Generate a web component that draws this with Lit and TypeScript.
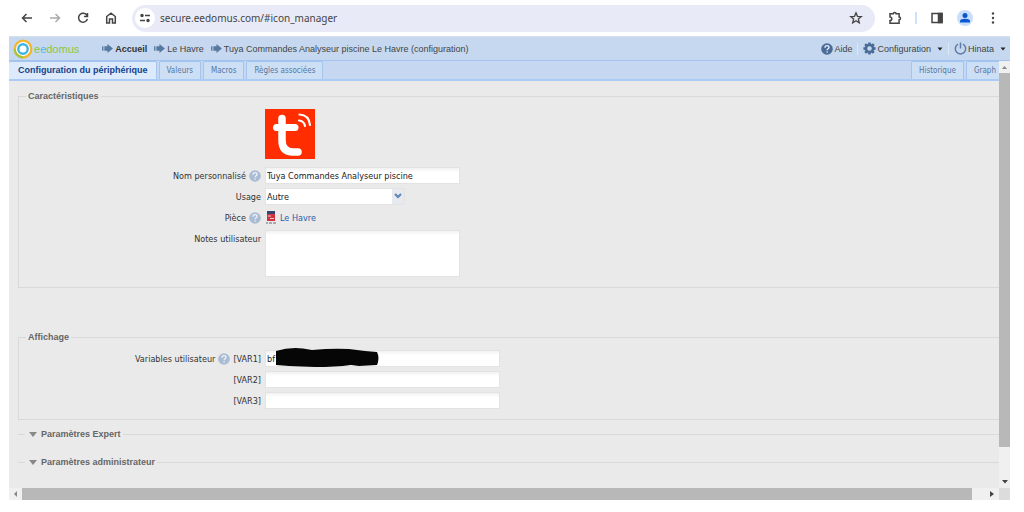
import { LitElement, html, svg, css } from "lit";
import { customElement, property } from "lit/decorators.js";

const arrow = html`<svg class="arrow" viewBox="0 0 12 10" aria-hidden="true"><path d="M0 2.500h1.500v5H0zM2.500 2.500H6V0l6 5-6 5V7.500H2.500z" fill="#5679a0" /></svg>`;

const caret = html`<svg class="caret" viewBox="0 0 6 4" aria-hidden="true"><path d="M0.500 0.500h5L3 3.500z" fill="#222" /></svg>`;

@customElement("help-mark")
class HelpMark extends LitElement {
  @property({ type: Boolean, reflect: true }) dark = false;

  static styles = css`
    :host { display: inline-flex; flex: none; width: 12px; height: 12px; color: #a9bcd3; }
    :host([dark]) { color: #4a6b97; }
    svg { display: block; width: 100%; height: 100%; }
  `;

  render() {
    return html`<svg viewBox="0 0 12 12" aria-hidden="true">
      <circle cx="6" cy="6" r="5.8" fill="currentColor" />
      <path d="M4 4.700C4 3.400 4.900 2.700 6 2.700s2 .7 2 1.800c0 1.300-1.900 1.400-1.900 2.800" fill="none" stroke="#eef3f9" stroke-width="1.300" />
      <circle cx="6.100" cy="9" r=".8" fill="#eef3f9" />
    </svg>`;
  }
}

@customElement("browser-bar")
class BrowserBar extends LitElement {
  static styles = css`
    :host { display: flex; align-items: center; height: 36px; padding: 0 24px 0 20px; box-sizing: border-box; background: #fff; }
    button { display: flex; align-items: center; justify-content: center; width: 14px; height: 14px; padding: 0; border: 0; background: none; flex: none; }
    svg { width: 14px; height: 14px; display: block; fill: none; stroke: #444; stroke-width: 1.500; }
    .nav { display: flex; gap: 14px; }
    .off svg { stroke: #aaa; }
    .address { display: flex; align-items: center; flex: 1; gap: 5px; height: 27px; margin: 0 13px 0 14px; padding: 0 12px 0 3px; border-radius: 14px; background: #e8ebf7; box-sizing: border-box; }
    .site { width: 20px; height: 20px; border-radius: 50%; background: #fff; }
    input { flex: 1; min-width: 0; border: 0; padding: 0; background: none; font: 10px/16px "Noto Sans", sans-serif; color: #444; outline: 0; }
    .tools { display: flex; align-items: center; gap: 13px; }
    .rule { width: 2px; height: 12px; background: #cfe2fb; }
    .me { width: 16px; height: 16px; border-radius: 50%; background: #c8defb; }
    .me svg { width: 16px; height: 16px; stroke: none; fill: #0b57d0; }
    .solid svg { fill: #444; stroke: none; }
  `;

  render() {
    return html`
      <div class="nav">
        <button aria-label="Retour"><svg viewBox="0 0 14 14"><path d="M12 7H2.500M6.500 3L2.500 7l4 4" /></svg></button>
        <button class="off" aria-label="Avancer"><svg viewBox="0 0 14 14"><path d="M2 7h9.500M7.500 3l4 4-4 4" /></svg></button>
        <button aria-label="Actualiser"><svg viewBox="0 0 14 14"><path d="M11 4.500A4.500 4.500 0 1 0 11.400 8M11.500 2v3.500H8" /></svg></button>
        <button aria-label="Accueil"><svg viewBox="0 0 14 14"><path d="M2.700 12V5.500L7 2.200l4.300 3.300V12H8.500V8h-3v4z" /></svg></button>
      </div>
      <div class="address">
        <button class="site" aria-label="Informations sur le site"><svg viewBox="0 0 14 14"><path d="M7 4.500h5M2 9.500h5" /><circle cx="4" cy="4.500" r="1" fill="#444" /><circle cx="10" cy="9.500" r="1" fill="#444" /></svg></button>
        <input aria-label="Adresse" value="secure.eedomus.com/#icon_manager" />
        <button aria-label="Favori"><svg viewBox="0 0 14 14"><path d="M7 1.800l1.500 3.500 3.800.3-2.900 2.500.9 3.700L7 9.800l-3.300 2 .9-3.700-2.900-2.500 3.800-.3z" stroke-width="1.300" /></svg></button>
      </div>
      <div class="tools">
        <button aria-label="Extensions"><svg viewBox="0 0 14 14"><path d="M2 2.800h3.300a1.400 1.400 0 0 1 2.800 0h3V6a1.400 1.400 0 0 1 0 2.800v3.400H2V9.500a1.800 1.800 0 0 0 0-3.600z" /></svg></button>
        <span class="rule"></span>
        <button aria-label="Panneau"><svg viewBox="0 0 14 14"><path d="M2 2.500h10v9H2z" /><path d="M8.500 2.500H12v9H8.500z" fill="#444" /></svg></button>
        <button class="me" aria-label="Profil"><svg viewBox="0 0 16 16"><circle cx="8" cy="5.500" r="2.500" /><path d="M3 12.500V11c0-3 10-3 10 0v1.500z" /></svg></button>
        <button class="solid" aria-label="Menu"><svg viewBox="0 0 14 14"><circle cx="7" cy="2.500" r="1.200" /><circle cx="7" cy="7" r="1.200" /><circle cx="7" cy="11.500" r="1.200" /></svg></button>
      </div>
    `;
  }
}

@customElement("app-header")
class AppHeader extends LitElement {
  static styles = css`
    :host { display: flex; align-items: center; height: 25px; padding: 0 4px; box-sizing: border-box; background: #c6d8ef; border-top: 1px solid #d8e0ea; border-bottom: 1px solid #a3c4ee; font: 9px/12px "Liberation Sans", Arial, sans-serif; white-space: nowrap; color: #444; }
    a { display: flex; align-items: center; gap: 2px; color: inherit; text-decoration: none; }
    .logo { margin-right: 23px; gap: 1px; font-size: 11px; color: #8dc641; }
    .logo svg { width: 20px; height: 20px; }
    .blue { color: #4db7e0; }
    .arrow { width: 11px; height: 9px; }
    nav { display: flex; flex: 1; gap: 7px; min-width: 0; }
    .home { font-weight: bold; color: #333; }
    .menu { display: flex; align-items: center; }
    button { display: flex; align-items: center; gap: 1px; padding: 0; border: 0; background: none; font: inherit; color: inherit; }
    .rule { width: 1px; height: 12px; margin: 0 5px; background: #dbe8f8; }
    .icon { width: 13px; height: 13px; }
    .caret { width: 6px; height: 4px; margin-left: 5px; }
  `;

  render() {
    const teeth = [0, 45, 90, 135, 180, 225, 270, 315];
    return html`
      <a class="logo" href="#home" aria-label="eedomus">
        <svg viewBox="0 0 20 20" fill="none" aria-hidden="true">
          <circle cx="10" cy="10" r="8.500" fill="#fff" />
          <circle cx="10" cy="10" r="8.300" stroke="#f3b52c" stroke-width="2.200" />
          <path d="M10 18.300A8.300 8.300 0 0 1 1.700 10" stroke="#a5c63b" stroke-width="2.200" />
          <circle cx="10" cy="10" r="4.700" stroke="#3fb4de" stroke-width="2.400" />
        </svg>
        <span>e<span class="blue">e</span>domus</span>
      </a>
      <nav aria-label="Fil d'Ariane">
        <a class="home" href="#home">${arrow}Accueil</a>
        <a href="#room">${arrow}Le Havre</a>
        <a href="#device">${arrow}Tuya Commandes Analyseur piscine Le Havre (configuration)</a>
      </nav>
      <div class="menu">
        <button><help-mark dark></help-mark>Aide</button>
        <span class="rule"></span>
        <button>
          <svg class="icon" viewBox="0 0 13 13" aria-hidden="true">
            ${teeth.map((a) => svg`<path d="M5.300 0.400h2.400l.4 3H4.900z" fill="#4a6b97" transform="rotate(${a} 6.500 6.500)" />`)}
            <circle cx="6.500" cy="6.500" r="3.500" fill="none" stroke="#4a6b97" stroke-width="2.400" />
          </svg>
          Configuration ${caret}
        </button>
        <span class="rule"></span>
        <button>
          <svg class="icon" viewBox="0 0 13 13" fill="none" stroke="#5c7ba5" stroke-width="1.500" aria-hidden="true"><path d="M4 2.200a5.200 5.200 0 1 0 5 0M6.500 0.500v6" /></svg>
          Hinata ${caret}
        </button>
      </div>
    `;
  }
}

@customElement("tab-strip")
class TabStrip extends LitElement {
  static styles = css`
    :host { display: flex; justify-content: space-between; height: 20px; box-sizing: border-box; background: #c6d8f1; border-bottom: 2px solid #a9cbf5; overflow: hidden; }
    .group { display: flex; gap: 2px; }
    button { flex: none; padding: 0 7px; border: 1px solid #a3c4ee; border-bottom: 0; border-radius: 2px 2px 0 0; background: #cddff5; color: #55769f; font: 8px/17px "DejaVu Sans Condensed", "DejaVu Sans", sans-serif; }
    button.on { padding: 0 8px 0 9px; background: #dceafb; color: #15428b; font: bold 9px/17px "Liberation Sans", Arial, sans-serif; border-left: 0; }
    .right { margin-right: -5px; }
  `;

  render() {
    return html`
      <div class="group" role="tablist">
        <button class="on" role="tab" aria-selected="true">Configuration du périphérique</button>
        <button role="tab">Valeurs</button>
        <button role="tab">Macros</button>
        <button role="tab">Règles associées</button>
      </div>
      <div class="group right" role="tablist">
        <button role="tab">Historique</button>
        <button role="tab">Graph</button>
      </div>
    `;
  }
}

@customElement("app-root")
class AppRoot extends LitElement {
  static styles = css`
    :host { display: flex; flex-direction: column; min-height: 100vh; padding-bottom: 12px; box-sizing: border-box; background: #fff; font: 9px/12px "DejaVu Sans Condensed", "DejaVu Sans", sans-serif; color: #333; }
    .frame { display: flex; flex-direction: column; flex: 1; margin: 0 14px 0 9px; }
    .view { display: grid; grid-template-columns: minmax(0, 1fr) 11px; grid-template-rows: 1fr 12px; flex: 1; }
    .page { display: flex; flex-direction: column; overflow: hidden; background: #eaeaea; }
    form { display: flex; flex-direction: column; padding: 9px 0 4px 9px; }
    fieldset { margin: 0 -2px 0 0; border: 1px solid #d9d9d9; min-width: 0; padding: 7px 0 10px; }
    legend { height: 12px; margin-left: 7px; padding: 0 2px; font: bold 9px/12px "Liberation Sans", Arial, sans-serif; color: #666; }
    .display { margin-top: 43px; }
    .folded { margin-top: 8px; padding: 0; border-width: 1px 0 0; height: 20px; box-sizing: border-box; }
    .folded button { display: flex; align-items: center; gap: 4px; padding: 0 0 0 2px; border: 0; background: none; font: inherit; color: inherit; line-height: 12px; }
    .fold { width: 8px; height: 5px; }
    .rows { display: grid; grid-template-columns: 242px minmax(0, 1fr); gap: 4px; align-items: start; }
    .name { display: flex; justify-content: flex-end; align-items: center; gap: 3px; min-height: 17px; }
    .icon { width: 50px; height: 50px; margin-bottom: 4px; display: block; }
    input, textarea, select { display: block; box-sizing: border-box; margin: 0; border: 1px solid #e3e3e3; border-radius: 0; padding: 0 1px; background: #fff linear-gradient(#f1f1f1, #fff 4px); font: inherit; color: #222; outline: 0; }
    input { height: 17px; width: 235px; }
    .short { width: 195px; }
    textarea { width: 195px; height: 47px; resize: none; }
    .pick { position: relative; width: 140px; }
    select { width: 100%; height: 17px; appearance: none; background: linear-gradient(90deg, #fff 126px, #e6e9ee 126px); }
    .chevron { position: absolute; right: 3px; top: 5px; width: 8px; height: 6px; pointer-events: none; }
    .room { display: flex; align-items: center; gap: 3px; height: 17px; color: #2a5caa; text-decoration: none; }
    .thumb { width: 12px; height: 13px; }
    .masked { position: relative; width: 235px; }
    .ink { position: absolute; left: 10px; top: -3px; width: 106px; height: 21px; pointer-events: none; }
    .vbar, .hbar { display: flex; background: #f0f0f0; }
    .vbar { flex-direction: column; }
    .arrow { flex: none; width: 11px; height: 12px; }
    .hbar .arrow { width: 13px; }
    .thumbbar { flex: 1; background: #b8b8b8; }
    .vbar .thumbbar { margin-bottom: 29px; }
    .hbar .thumbbar { margin-right: 14px; }
    .corner { background: #dcdcdc; }
  `;

  variable(n: number, value = "") {
    return html`
      <label class="name" for="var${n}">
        ${n === 1 ? html`Variables utilisateur <help-mark></help-mark>` : ""}
        <span>[VAR${n}]</span>
      </label>
      <div class="masked">
        <input id="var${n}" .value=${value} />
        ${value
          ? html`<svg class="ink" viewBox="0 0 106 21" aria-hidden="true"><path d="M1 4Q14 0 28 1.500L37 3Q58 1 74 2L90 4 102 5Q105 11 102 18L84 19 76 18Q60 20 40 20L14 19 1 18z" fill="#060606" /></svg>`
          : ""}
      </div>
    `;
  }

  folded(title: string) {
    return html`<fieldset class="folded">
      <legend><button type="button" aria-expanded="false"><svg class="fold" viewBox="0 0 8 5" aria-hidden="true"><path d="M0 0h8L4 5z" fill="#888" /></svg>${title}</button></legend>
    </fieldset>`;
  }

  render() {
    return html`
      <browser-bar></browser-bar>
      <div class="frame">
        <app-header></app-header>
        <div class="view">
          <div class="page">
            <tab-strip></tab-strip>
            <form>
              <fieldset>
                <legend>Caractéristiques</legend>
                <div class="rows">
                  <span></span>
                  <svg class="icon" viewBox="0 0 50 50" role="img" aria-label="Tuya" fill="none" stroke="#fff" stroke-linecap="round" stroke-linejoin="round">
                    <path d="M0 0h50v50H0z" fill="#ff2d00" stroke="none" />
                    <path d="M17 9.500V31Q17 43 28 43H33" stroke-width="7.500" />
                    <path d="M11.500 18.500H30" stroke-width="7" />
                    <path d="M34 11.500Q39 12 40 17M34.500 5.500Q44 6 45 16" stroke-width="2.200" />
                  </svg>
                  <label class="name" for="nom">Nom personnalisé <help-mark></help-mark></label>
                  <input id="nom" class="short" value="Tuya Commandes Analyseur piscine" />
                  <label class="name" for="usage">Usage</label>
                  <div class="pick">
                    <select id="usage"><option>Autre</option></select>
                    <svg class="chevron" viewBox="0 0 8 6" aria-hidden="true"><path d="M1 1l3 3 3-3" fill="none" stroke="#5c84b5" stroke-width="2" /></svg>
                  </div>
                  <span class="name">Pièce <help-mark></help-mark></span>
                  <a class="room" href="#room">
                    <svg class="thumb" viewBox="0 0 12 13" aria-hidden="true">
                      <path d="M2 0h8v3H2z" fill="#34466f" /><path d="M2 3h8v7H2z" fill="#cf3340" />
                      <path d="M3 5h3M5 7.500h4" stroke="#f3c8cb" /><path d="M1 12h2m1 0h3m1 0h3" stroke="#667" />
                    </svg>Le Havre</a>
                  <label class="name" for="notes">Notes utilisateur</label>
                  <textarea id="notes"></textarea>
                </div>
              </fieldset>
              <fieldset class="display">
                <legend>Affichage</legend>
                <div class="rows">${this.variable(1, "bf")}${this.variable(2)}${this.variable(3)}</div>
              </fieldset>
              ${this.folded("Paramètres Expert")}${this.folded("Paramètres administrateur")}
            </form>
          </div>
          <div class="vbar">
            <svg class="arrow" viewBox="0 0 11 12" aria-hidden="true"><path d="M3 8h5L5.500 5z" fill="#888" /></svg>
            <div class="thumbbar"></div>
            <svg class="arrow" viewBox="0 0 11 12" aria-hidden="true"><path d="M3 4h6L6 7.500z" fill="#444" /></svg>
          </div>
          <div class="hbar">
            <svg class="arrow" viewBox="0 0 13 12" aria-hidden="true"><path d="M8 3v6L5 6z" fill="#888" /></svg>
            <div class="thumbbar"></div>
            <svg class="arrow" viewBox="0 0 13 12" aria-hidden="true"><path d="M4 3v6l4-3z" fill="#444" /></svg>
          </div>
          <div class="corner"></div>
        </div>
      </div>
    `;
  }
}
